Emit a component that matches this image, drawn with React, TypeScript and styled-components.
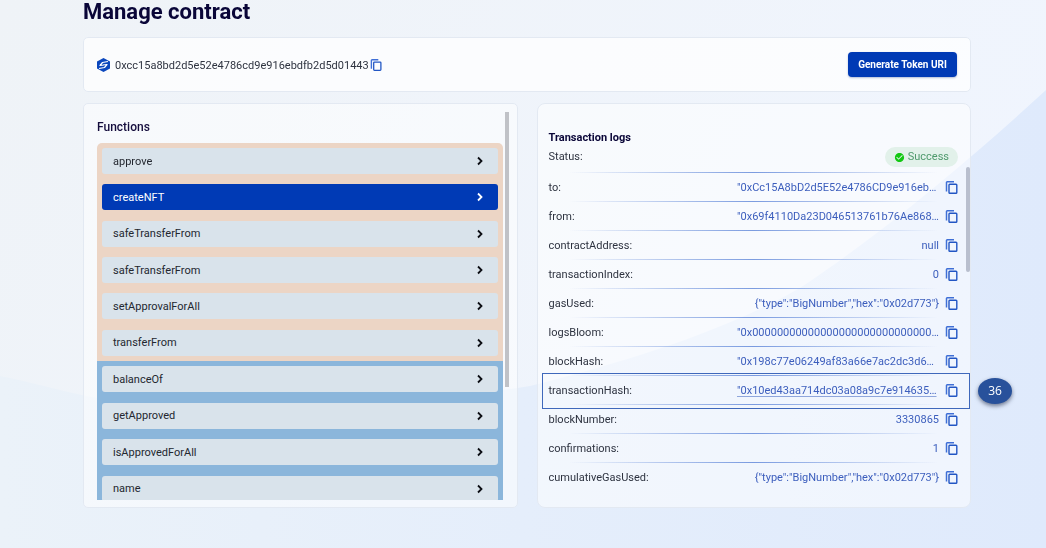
import React from "react";
import styled, { createGlobalStyle } from "styled-components";
import { MdCheckCircle } from "react-icons/md";

const GlobalStyle = createGlobalStyle`
  * { box-sizing: border-box; }
  html { background: #e4edfb; }
  body {
    margin: 0;
    overflow: hidden;
    font-family: Roboto, "Liberation Sans", sans-serif;
    font-size: 11px;
    color: #2e3340;
  }
  button { font-family: inherit; font-size: inherit; cursor: pointer; }
`;

const Backdrop = styled.svg`
  position: fixed;
  inset: 0;
  width: 100%;
  height: 100%;
  z-index: -1;
`;

const Page = styled.main`
  padding: 0 75px 40px 83px;
`;

const Title = styled.h1`
  margin: 0;
  height: 37px;
  font-size: 22px;
  line-height: 24px;
  font-weight: 700;
  color: #0a0638;
`;

const Card = styled.section`
  background: rgba(255, 255, 255, 0.5);
  border: 1px solid #e3e9f2;
  border-radius: 5px;
`;

const AddressBar = styled(Card)`
  display: flex;
  align-items: center;
  height: 55px;
  padding: 0 13px;
  background: rgba(255, 255, 255, 0.74);
`;

const Address = styled.span`
  margin: 2px 1px 0 5px;
  font-size: 11px;
  line-height: 16px;
`;

const CopyButton = styled.button`
  display: flex;
  padding: 0;
  border: 0;
  background: none;
  color: #2256c4;
`;

const PrimaryButton = styled.button`
  width: 109px;
  height: 25px;
  margin-left: auto;
  padding: 0;
  border: 0;
  border-radius: 4px;
  background: #003ab5;
  box-shadow: 0 1px 2px rgba(0, 40, 120, 0.3);
  color: #fff;
  font-size: 10px;
  font-weight: 700;
`;

const Columns = styled.div`
  display: grid;
  grid-template-columns: 1fr 1fr;
  gap: 19px;
  margin-top: 11px;
`;

const FunctionsPanel = styled(Card)`
  display: flex;
  align-items: flex-start;
  padding: 8px 8px 7px 13px;
`;

const FunctionsScroll = styled.div`
  flex: 1;
  height: 388px;
  overflow: hidden;
`;

const PanelTitle = styled.h2`
  margin: 0;
  padding: 7px 0 8px;
  font-size: 12px;
  line-height: 16px;
  font-weight: 500;
  color: #140c3c;
`;

const Thumb = styled.div<{ $height: number }>`
  flex: none;
  width: 4px;
  height: ${(p) => p.$height}px;
  margin-left: 2px;
  background: #c0c2c7;
`;

const Group = styled.ul<{ $kind: "write" | "read" }>`
  display: grid;
  grid-auto-rows: 1fr;
  align-items: center;
  min-height: ${(p) => (p.$kind === "write" ? 218 : 146)}px;
  margin: 0;
  padding: 0 5px;
  list-style: none;
  background: ${(p) => (p.$kind === "write" ? "#ecd5c5" : "#8bb6db")};
  border-radius: ${(p) => (p.$kind === "write" ? "5px 5px 0 0" : "0")};
`;

const FunctionButton = styled.button<{ $active: boolean }>`
  display: flex;
  align-items: center;
  justify-content: space-between;
  width: 100%;
  height: 26px;
  padding: 0 14px 0 11px;
  border: 0;
  border-radius: 3px;
  background: ${(p) => (p.$active ? "#003ab5" : "#d9e3eb")};
  color: ${(p) => (p.$active ? "#fff" : "#23272f")};
  svg { color: ${(p) => (p.$active ? "#fff" : "#0c0e14")}; }
`;

const LogsPanel = styled(Card)`
  padding: 25px 12px 14px 11px;
  border-radius: 8px;
`;

const LogsTitle = styled.h2`
  margin: 0;
  font-size: 11px;
  line-height: 18px;
  font-weight: 700;
  color: #0a0638;
`;

const StatusRow = styled.div`
  display: flex;
  justify-content: space-between;
  line-height: 20px;
`;

const StatusChip = styled.span`
  display: flex;
  align-items: center;
  gap: 3px;
  height: 20px;
  padding: 0 9px;
  border-radius: 10px;
  background: #e2f1ea;
  color: #4f9a6c;
  svg { color: #12c812; }
`;

const Logs = styled.div`
  position: relative;
  margin-top: 5px;
`;

const LogsThumb = styled.div`
  position: absolute;
  top: -5px;
  right: -12px;
  width: 4px;
  height: 105px;
  border-radius: 2px;
  background: #b9bfce;
`;

const LogList = styled.dl`
  margin: 0;
`;

const LogRow = styled.div`
  position: relative;
  display: flex;
  align-items: center;
  height: 29px;
  padding-top: 1px;
  background: linear-gradient(
      90deg,
      rgba(70, 115, 210, 0),
      rgba(70, 115, 210, 0.7) 50%,
      rgba(70, 115, 210, 0)
    )
    20px 0 / calc(100% - 40px) 1px no-repeat;
`;

const LogKey = styled.dt`
  flex: 1;
`;

const LogValue = styled.dd<{ $long: boolean }>`
  width: 202px;
  margin: 0 6px 0 0;
  text-align: ${(p) => (p.$long ? "left" : "right")};
  white-space: nowrap;
  color: #3c5ebd;
  a { color: inherit; text-underline-offset: 2px; text-decoration-thickness: 1px; text-decoration-color: #8fa6dc; }
`;

const Highlight = styled.div`
  position: absolute;
  inset: -2px -12px -5px -7px;
  border: 1px solid #3f68bb;
  pointer-events: none;
`;

const StepBadge = styled.span`
  position: absolute;
  top: 4px;
  left: calc(100% + 9px);
  width: 34px;
  height: 26px;
  border-radius: 50%;
  background: #28519b;
  box-shadow: 0 2px 4px rgba(30, 40, 70, 0.6);
  color: #fff;
  font-family: "Open Sans", "Noto Sans", sans-serif;
  font-size: 12px;
  line-height: 25px;
  text-align: center;
`;

const writeFunctions = [
  "approve",
  "createNFT",
  "safeTransferFrom",
  "safeTransferFrom",
  "setApprovalForAll",
  "transferFrom",
];

const readFunctions = ["balanceOf", "getApproved", "isApprovedForAll", "name"];

type Log = { key: string; value: string; long?: boolean; step?: number };

const logs: Log[] = [
  { key: "to", value: '"0xCc15A8bD2d5E52e4786CD9e916eb…', long: true },
  { key: "from", value: '"0x69f4110Da23D046513761b76Ae868…', long: true },
  { key: "contractAddress", value: "null" },
  { key: "transactionIndex", value: "0" },
  { key: "gasUsed", value: '{"type":"BigNumber","hex":"0x02d773"}' },
  { key: "logsBloom", value: '"0x00000000000000000000000000000…', long: true },
  { key: "blockHash", value: '"0x198c77e06249af83a66e7ac2dc3d6…', long: true },
  { key: "transactionHash", value: '"0x10ed43aa714dc03a08a9c7e914635…', long: true, step: 36 },
  { key: "blockNumber", value: "3330865" },
  { key: "confirmations", value: "1" },
  { key: "cumulativeGasUsed", value: '{"type":"BigNumber","hex":"0x02d773"}' },
];

const Logo = () => (
  <svg width="13" height="14" viewBox="0 0 26 28" aria-hidden="true">
    <path d="M13 0 26 7v14l-13 7L0 21V7z" fill="#0b47bd" />
    <path
      d="M22 7 11 9 6 15l8-1M4 21l11-2L20 13l-8 1"
      fill="none"
      stroke="#fff"
      strokeWidth="2.400"
      strokeLinejoin="round"
    />
  </svg>
);

const CopyIcon = ({ size }: { size: number }) => (
  <svg width={size} height={size} viewBox="0 0 13 13" fill="none" aria-hidden="true">
    <path d="M1.500 10.500V1.500Q1.500 .8 2.200 .8H9" stroke="#3f6fd6" strokeWidth="1.500" />
    <rect x="4" y="3.300" width="7.800" height="9" rx="0.800" stroke="currentColor" strokeWidth="1.400" />
  </svg>
);

const Chevron = () => (
  <svg width="9" height="10" viewBox="0 0 9 10" aria-hidden="true">
    <path d="M3 1.500 6.500 5 3 8.500" fill="none" stroke="currentColor" strokeWidth="1.800" />
  </svg>
);

const FunctionGroup = ({ kind, names }: { kind: "write" | "read"; names: string[] }) => (
  <Group $kind={kind}>
    {names.map((name, i) => (
      <li key={i}>
        <FunctionButton type="button" $active={name === "createNFT"}>
          {name}
          <Chevron />
        </FunctionButton>
      </li>
    ))}
  </Group>
);

export default function App() {
  return (
    <>
      <GlobalStyle />
      <Backdrop viewBox="0 0 1046 548" preserveAspectRatio="none" aria-hidden="true">
        <defs>
          <linearGradient id="sky" x1="0" y1="0" x2="1" y2="0.4">
            <stop offset="0" stopColor="#eff3f7" />
            <stop offset="1" stopColor="#f0f5fe" />
          </linearGradient>
          <linearGradient id="wave" x1="0" y1="0" x2="1" y2="0">
            <stop offset="0" stopColor="#ebf2f9" />
            <stop offset="0.5" stopColor="#e5eefb" />
            <stop offset="1" stopColor="#dfeafc" />
          </linearGradient>
        </defs>
        <rect width="1046" height="548" fill="url(#sky)" />
        <path
          d="M0 376C60 388 110 408 200 408C330 408 430 402 530 386C640 358 730 328 800 288C880 235 970 160 1046 90V548H0Z"
          fill="url(#wave)"
        />
      </Backdrop>
      <Page>
        <Title>Manage contract</Title>
        <AddressBar>
          <Logo />
          <Address>0xcc15a8bd2d5e52e4786cd9e916ebdfb2d5d01443</Address>
          <CopyButton type="button" aria-label="Copy address">
            <CopyIcon size={12} />
          </CopyButton>
          <PrimaryButton type="button">Generate Token URI</PrimaryButton>
        </AddressBar>
        <Columns>
          <FunctionsPanel>
            <FunctionsScroll>
              <PanelTitle>Functions</PanelTitle>
              <FunctionGroup kind="write" names={writeFunctions} />
              <FunctionGroup kind="read" names={readFunctions} />
            </FunctionsScroll>
            <Thumb $height={275} />
          </FunctionsPanel>
          <LogsPanel>
            <LogsTitle>Transaction logs</LogsTitle>
            <StatusRow>
              Status:
              <StatusChip>
                <MdCheckCircle size={11} />
                Success
              </StatusChip>
            </StatusRow>
            <Logs>
              <LogList>
                {logs.map((log) => (
                  <LogRow key={log.key}>
                    <LogKey>{log.key}:</LogKey>
                    <LogValue $long={!!log.long}>
                      {log.step ? <a href="#transaction">{log.value}</a> : log.value}
                    </LogValue>
                    <CopyButton type="button" aria-label={`Copy ${log.key}`}>
                      <CopyIcon size={13} />
                    </CopyButton>
                    {log.step && (
                      <Highlight>
                        <StepBadge>{log.step}</StepBadge>
                      </Highlight>
                    )}
                  </LogRow>
                ))}
              </LogList>
              <LogsThumb />
            </Logs>
          </LogsPanel>
        </Columns>
      </Page>
    </>
  );
}
